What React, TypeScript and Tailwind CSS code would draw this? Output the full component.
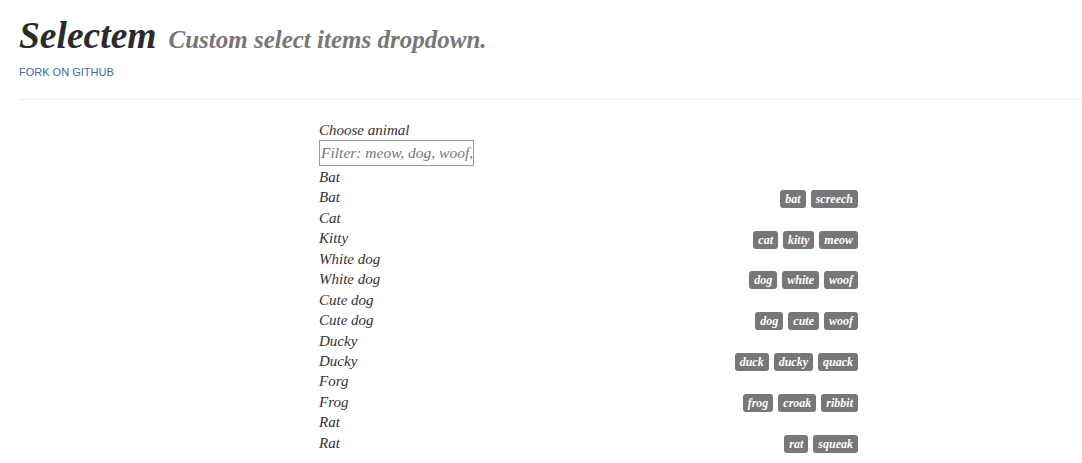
const script = { fontFamily: '"Liberation Serif", serif' };

const animals = [
  { group: "Bat", name: "Bat", tags: ["bat", "screech"] },
  { group: "Cat", name: "Kitty", tags: ["cat", "kitty", "meow"] },
  { group: "White dog", name: "White dog", tags: ["dog", "white", "woof"] },
  { group: "Cute dog", name: "Cute dog", tags: ["dog", "cute", "woof"] },
  { group: "Ducky", name: "Ducky", tags: ["duck", "ducky", "quack"] },
  { group: "Forg", name: "Frog", tags: ["frog", "croak", "ribbit"] },
  { group: "Rat", name: "Rat", tags: ["rat", "squeak"] },
];

export default function App() {
  return (
    <div className="h-[463px] overflow-hidden bg-white text-[#333]" style={script}>
      <header className="ml-[19px] h-[100px] border-b border-[#eeeeee] pt-[12px]">
        <h1 className="flex items-baseline gap-[12px] italic">
          <span className="text-[37.5px] leading-[48px] font-bold text-[#2b2b2b]">Selectem</span>
          <span className="text-[25px] leading-[48px] font-bold text-[#777]">
            Custom select items dropdown.
          </span>
        </h1>
        <a
          href="#"
          className="block text-[11px] leading-[16px] text-[#3a6ea5]"
          style={{ fontFamily: '"Liberation Sans", sans-serif' }}
        >
          FORK ON GITHUB
        </a>
      </header>

      <main className="ml-[319px] w-[539px] pt-[20px] text-[15px] italic">
        <label className="block h-[20px] leading-[20px]">Choose animal</label>
        <div className="mb-[1px] flex h-[26px] w-[155px] items-center overflow-hidden border border-[#999] pl-[1px] text-[15.5px] whitespace-nowrap text-[#777]">
          Filter: meow, dog, woof,
        </div>
        {animals.map((a) => (
          <div key={a.name + a.group}>
            <div className="h-[20.45px] leading-[20.45px]">{a.group}</div>
            <div className="flex h-[20.45px] items-center justify-between leading-[20.45px]">
              <span>{a.name}</span>
              <span className="flex gap-[5px] pt-[2px]">
                {a.tags.map((t) => (
                  <span
                    key={t}
                    className="rounded-[3px] bg-[#777] px-[5px] text-[12px] leading-[18px] font-bold text-white"
                  >
                    {t}
                  </span>
                ))}
              </span>
            </div>
          </div>
        ))}
      </main>
    </div>
  );
}
